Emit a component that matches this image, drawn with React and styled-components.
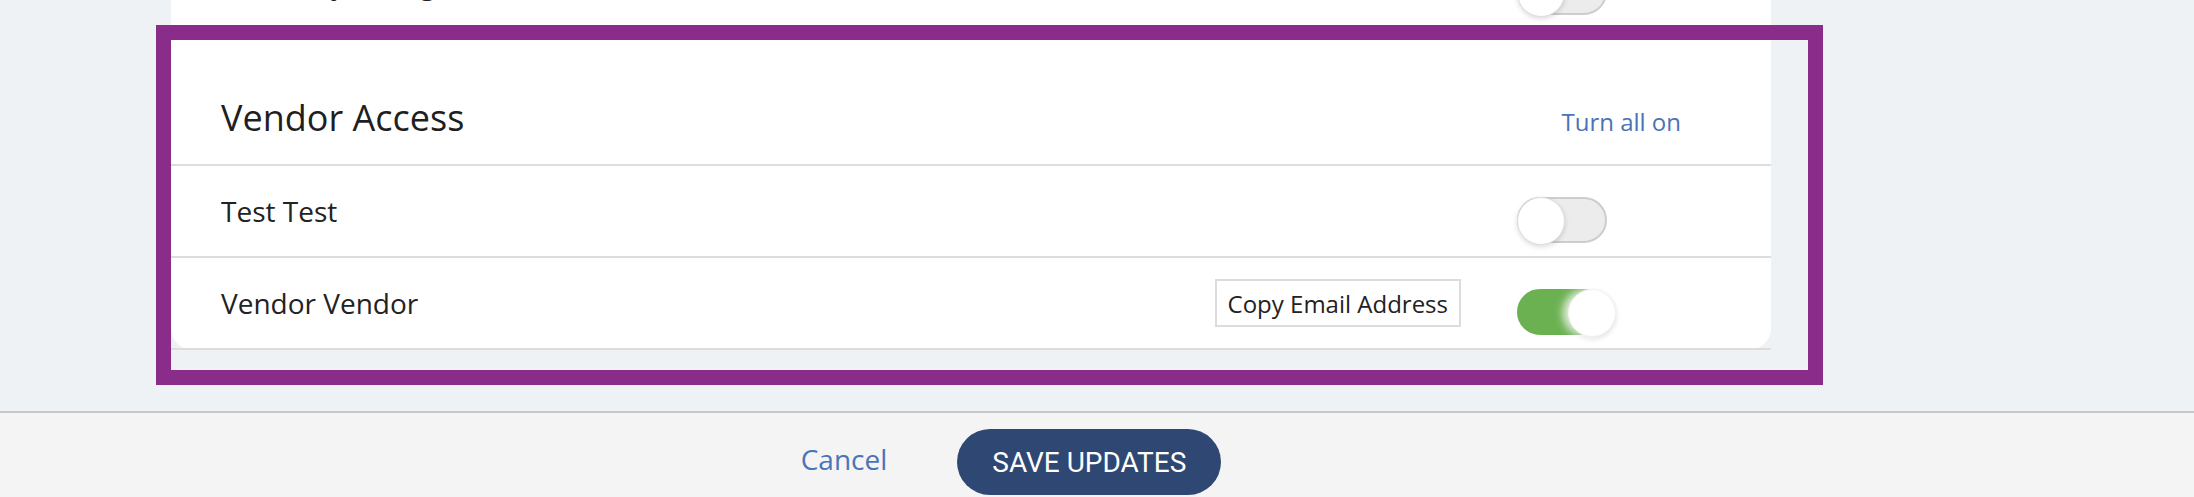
import React from "react";
import styled, { createGlobalStyle } from "styled-components";

const GlobalStyle = createGlobalStyle`
  *, *::before, *::after { box-sizing: border-box; }
  html, body { margin: 0; padding: 0; }
  body {
    background: #eef2f5;
    font-family: "Open Sans", "Liberation Sans", sans-serif;
    color: #222222;
    overflow: hidden;
  }
`;

const Page = styled.div`
  display: flex;
  flex-direction: column;
  min-height: 100vh;
`;

const Main = styled.main`
  margin-top: -62px;
  padding: 0 0 61px 171px;
`;

const Panel = styled.div`
  width: 1600px;
  background: #ffffff;
  border-radius: 0 0 22px 22px;
`;

const Section = styled.section`
  position: relative;
`;

const HighlightFrame = styled.div`
  position: absolute;
  top: -5px;
  left: -15px;
  right: -52px;
  bottom: -35px;
  border: 15px solid #8a2c89;
  pointer-events: none;
  z-index: 2;
`;

const SectionHeader = styled.div`
  display: flex;
  align-items: baseline;
  height: 136px;
  padding: 66px 90px 0 50px;
  border-bottom: 2px solid #dddddd;
`;

const SectionTitle = styled.h2`
  flex: 1;
  margin: 0;
  font-size: 36px;
  line-height: 44px;
  font-weight: 400;
  color: #1f1f1f;
`;

const TextLink = styled.a`
  font-size: ${(p) => p.$size || 24}px;
  line-height: ${(p) => (p.$size || 24) + 8}px;
  color: #4b73b8;
  text-decoration: none;
  cursor: pointer;
`;

const Row = styled.div`
  display: flex;
  align-items: center;
  height: 92px;
  padding: 0 49px 0 50px;
  border-bottom: 2px solid #dddddd;
`;

const RowLabel = styled.span`
  flex: 1;
  font-size: 28px;
  line-height: 38px;
  color: #222222;
`;

const CopyButton = styled.button`
  height: 48px;
  margin-right: 56px;
  padding: 0 11px;
  border: 2px solid #dcdcdc;
  background: #ffffff;
  font-family: "Open Sans", "Liberation Sans", sans-serif;
  font-size: 24px;
  color: #222222;
  cursor: pointer;
`;

const Track = styled.div`
  position: relative;
  flex: none;
  width: 90px;
  height: 46px;
  margin: 18px 115px 0 0;
  border-radius: 23px;
  border: 2px solid ${(p) => (p.$on ? "#6bb152" : "#cdcdcd")};
  background: ${(p) => (p.$on ? "#6bb152" : "#ececec")};
  cursor: pointer;
`;

const Knob = styled.span`
  position: absolute;
  top: -2px;
  left: ${(p) => (p.$on ? "49px" : "-2px")};
  width: 48px;
  height: 48px;
  border-radius: 50%;
  background: #ffffff;
  border: 1px solid ${(p) => (p.$on ? "#f2f2f2" : "#dedede")};
  box-shadow: ${(p) =>
    p.$on
      ? "-5px 0 8px rgba(255,255,255,0.85), 0 2px 5px rgba(0,0,0,0.14)"
      : "0 2px 5px rgba(0,0,0,0.14)"};
`;

const Footer = styled.footer`
  flex: 1;
  display: flex;
  justify-content: center;
  align-items: center;
  padding: 16px 172px 20px 0;
  border-top: 2px solid #c8c8c8;
  background: #f4f4f4;
`;

const CancelLink = styled(TextLink)`
  margin: 0 70px 6px 0;
`;

const SaveButton = styled.button`
  height: 66px;
  padding: 0 35px;
  border: none;
  border-radius: 33px;
  background: #2e4773;
  color: #ffffff;
  font-family: Roboto, "Liberation Sans", sans-serif;
  font-size: 28px;
  font-weight: 400;
  cursor: pointer;
`;

function Toggle({ on }) {
  return (
    <Track $on={on} role="switch" aria-checked={on}>
      <Knob $on={on} />
    </Track>
  );
}

function SettingRow({ label, on, children }) {
  return (
    <Row>
      <RowLabel>{label}</RowLabel>
      {children}
      <Toggle on={on} />
    </Row>
  );
}

export default function App() {
  return (
    <Page>
      <GlobalStyle />
      <Main>
        <Panel>
          <Section>
            <SettingRow label="Inventory Changes" on={false} />
          </Section>
          <Section>
            <HighlightFrame />
            <SectionHeader>
              <SectionTitle>Vendor Access</SectionTitle>
              <TextLink>Turn all on</TextLink>
            </SectionHeader>
            <SettingRow label="Test Test" on={false} />
            <SettingRow label="Vendor Vendor" on={true}>
              <CopyButton>Copy Email Address</CopyButton>
            </SettingRow>
          </Section>
        </Panel>
      </Main>
      <Footer>
        <CancelLink $size={28}>Cancel</CancelLink>
        <SaveButton>SAVE UPDATES</SaveButton>
      </Footer>
    </Page>
  );
}
